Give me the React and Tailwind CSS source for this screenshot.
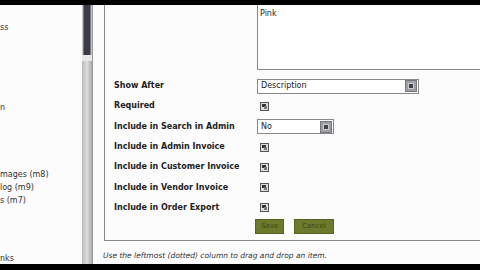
import React from 'react';

const font = { fontFamily: '"DejaVu Sans", Verdana, sans-serif' };

const Check = () => (
  <div className="ml-[3px] w-[9px] h-[9px] border border-[#555] bg-[#ddd] relative overflow-hidden">
    <div className="absolute left-[1px] top-[1px] w-[4px] h-[3px] bg-[#333]" />
    <div className="absolute right-[1px] bottom-[1px] w-[3px] h-[3px] bg-[#777]" />
  </div>
);

const DropBtn = () => (
  <div className="w-[12px] h-[12px] border border-[#777] bg-[#9aa0a6] flex items-center justify-center">
    <div className="w-[6px] h-[6px] bg-[#444] border border-[#ccc]" />
  </div>
);

const Select = ({ value, width }) => (
  <div
    className={`h-[15px] border border-[#888] bg-white flex items-center justify-between pl-[3px] pr-[1px] text-[8px] text-[#222] ${width}`}
  >
    <span>{value}</span>
    <DropBtn />
  </div>
);

const rows = [
  { label: 'Show After', ctrl: <Select value="Description" width="w-[162px]" /> },
  { label: 'Required', ctrl: <Check /> },
  { label: 'Include in Search in Admin', ctrl: <Select value="No" width="w-[77px]" /> },
  { label: 'Include in Admin Invoice', ctrl: <Check /> },
  { label: 'Include in Customer Invoice', ctrl: <Check /> },
  { label: 'Include in Vendor Invoice', ctrl: <Check /> },
  { label: 'Include in Order Export', ctrl: <Check /> },
];

export default function App() {
  return (
    <div className="w-[480px] h-[270px] bg-black flex flex-col overflow-hidden" style={font}>
      <div className="h-[5px] shrink-0" />
      <div className="flex flex-1 bg-[#fcfcfc] overflow-hidden">
        {/* sidebar */}
        <div className="w-[82px] shrink-0 relative text-[8px] text-[#333] leading-none">
          <div className="absolute left-0 top-[19px]">ss</div>
          <div className="absolute left-0 top-[99px]">n</div>
          <div className="absolute left-0 top-[166px]">mages (m8)</div>
          <div className="absolute left-0 top-[179px]">log (m9)</div>
          <div className="absolute left-0 top-[192px]">s (m7)</div>
          <div className="absolute left-0 top-[250px]">nks</div>
        </div>
        {/* scrollbar */}
        <div className="w-[11px] shrink-0 bg-[#c8c8c8] border-r border-[#999] flex flex-col">
          <div className="h-[50px] mx-[1px] bg-[#3a3d48] border-x border-[#777]" />
          <div className="h-[6px] bg-[#e8e8e8]" />
          <div className="flex-1 bg-gradient-to-r from-[#bbb] via-[#ddd] to-[#aaa]" />
        </div>
        {/* main */}
        <div className="flex-1 flex flex-col pl-[11px]">
          <div className="h-[236px] shrink-0 border-l border-b border-[#888] flex flex-col pl-[9px]">
            <div className="flex">
              <div className="w-[143px] shrink-0" />
              <div className="h-[65px] flex-1 mr-[-20px] border-l border-b border-[#888] bg-white px-[2px] pt-[3px] text-[8px] text-[#222]">
                Pink
              </div>
            </div>
            <div className="flex flex-col mt-[6px]">
              {rows.map((r) => (
                <div key={r.label} className="h-[20.3px] flex items-center">
                  <div className="w-[143px] shrink-0 text-[8px] font-bold text-[#222]">{r.label}</div>
                  <div className="flex items-center">{r.ctrl}</div>
                </div>
              ))}
            </div>
            <div className="flex gap-[10px] ml-[141px] mt-[1px]">
              <div className="w-[29px] h-[15px] bg-[#6b7a2c] border border-[#56631f] flex items-center justify-center text-[7px] text-[#3f4a14]">Save</div>
              <div className="w-[40px] h-[15px] bg-[#6b7a2c] border border-[#56631f] flex items-center justify-center text-[7px] text-[#3f4a14]">Cancel</div>
            </div>
          </div>
          <div className="pt-[9px] -ml-[1px] text-[7.5px] italic text-[#333]">
            Use the leftmost (dotted) column to drag and drop an item.
          </div>
        </div>
      </div>
      <div className="h-[6px] shrink-0" />
    </div>
  );
}
